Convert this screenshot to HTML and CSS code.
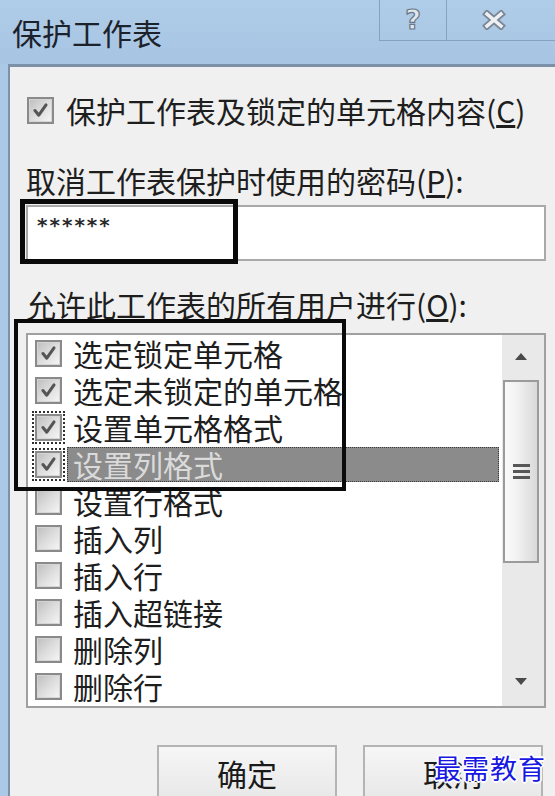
FILE: index.html
```html
<!DOCTYPE html>
<html lang="zh-CN">
<head>
<meta charset="utf-8">
<title>保护工作表</title>
<link rel="stylesheet" href="styles.css">
</head>
<body>
<div class="window">
  <div class="titlebar">
    <div class="title">保护工作表</div>
    <div class="ctrls">
      <div class="cbtn help">?</div>
      <div class="cbtn close">
        <svg width="24" height="20" viewBox="0 0 24 20"><path d="M5 4 L19 16 M19 4 L5 16" stroke="#7a8693" stroke-width="7" stroke-linecap="square" fill="none"/><path d="M5 4 L19 16 M19 4 L5 16" stroke="#eef1f4" stroke-width="3.5" stroke-linecap="square" fill="none"/></svg>
      </div>
    </div>
  </div>
  <div class="frame">
    <div class="client">
      <div class="opt">
        <span class="cb on"><svg viewBox="0 0 27 27"><path d="M7 13.5 L11.5 19 L20 7" class="tick"/></svg></span>
        <span class="opt-text">保护工作表及锁定的单元格内容(<u>C</u>)</span>
      </div>
      <div class="label">取消工作表保护时使用的密码(<u>P</u>):</div>
      <div class="pwd">******</div>
      <div class="label label2">允许此工作表的所有用户进行(<u>O</u>):</div>
      <div class="list">
        <div class="items">
          <div class="row"><span class="cb on"><svg viewBox="0 0 27 27"><path d="M7 13.5 L11.5 19 L20 7" class="tick"/></svg></span><span class="txt">选定锁定单元格</span></div>
          <div class="row"><span class="cb on"><svg viewBox="0 0 27 27"><path d="M7 13.5 L11.5 19 L20 7" class="tick"/></svg></span><span class="txt">选定未锁定的单元格</span></div>
          <div class="row"><span class="cb on focus"><svg viewBox="0 0 27 27"><path d="M7 13.5 L11.5 19 L20 7" class="tick"/></svg></span><span class="txt">设置单元格格式</span></div>
          <div class="row sel"><span class="cb on focus"><svg viewBox="0 0 27 27"><path d="M7 13.5 L11.5 19 L20 7" class="tick"/></svg></span><span class="txt">设置列格式</span></div>
          <div class="row"><span class="cb"></span><span class="txt">设置行格式</span></div>
          <div class="row"><span class="cb"></span><span class="txt">插入列</span></div>
          <div class="row"><span class="cb"></span><span class="txt">插入行</span></div>
          <div class="row"><span class="cb"></span><span class="txt">插入超链接</span></div>
          <div class="row"><span class="cb"></span><span class="txt">删除列</span></div>
          <div class="row"><span class="cb"></span><span class="txt">删除行</span></div>
        </div>
        <div class="scroll">
          <div class="arrow"><svg width="12" height="7" viewBox="0 0 12 7"><path d="M0 7 L6 0 L12 7 Z" fill="#4a4a4a"/></svg></div>
          <div class="thumb"><span class="grip"></span><span class="grip"></span><span class="grip"></span></div>
          <div class="arrow down"><svg width="12" height="7" viewBox="0 0 12 7"><path d="M0 0 L12 0 L6 7 Z" fill="#4a4a4a"/></svg></div>
        </div>
      </div>
      <div class="buttons">
        <div class="btn">确定</div>
        <div class="btn">取消</div>
      </div>
    </div>
  </div>
</div>
<div class="mark mark-pwd"></div>
<div class="mark mark-list"></div>
<div class="watermark">最需教育</div>
</body>
</html>
```
FILE: styles.css
```css
html, body {
  margin: 0;
  padding: 0;
}
body {
  width: 555px;
  height: 796px;
  overflow: hidden;
  position: relative;
  background: #abc9e7;
  font-family: "Noto Sans CJK SC", "Microsoft YaHei", sans-serif;
  color: #1e1e1e;
}
.window {
  height: 796px;
  display: flex;
  flex-direction: column;
  background: #abc9e7;
}
.titlebar {
  height: 64px;
  flex: none;
  display: flex;
  align-items: flex-start;
  background: linear-gradient(#afcce8, #a7c5e3);
}
.title {
  font-size: 30px;
  line-height: 64px;
  padding-left: 12px;
  color: #1c222b;
}
.ctrls {
  margin-left: auto;
  display: flex;
}
.cbtn {
  height: 40px;
  display: flex;
  align-items: center;
  justify-content: center;
  border-bottom: 1px solid #86a2bf;
  box-sizing: content-box;
}
.help {
  width: 66px;
  border-left: 1px solid #86a2bf;
  border-right: 1px solid #86a2bf;
  font-family: "DejaVu Sans", sans-serif;
  font-weight: bold;
  font-size: 27px;
  line-height: 36px;
  color: #dfe6ee;
  -webkit-text-stroke: 1.2px #6c7886;
}
.close {
  width: 108px;
  padding-right: 14px;
  box-sizing: border-box;
  height: 41px;
}
.frame {
  flex: 1;
  display: flex;
  padding-left: 8px;
}
.client {
  flex: 1;
  border-top: 3px solid #7c90a7;
  border-left: 2px solid #7c90a7;
  background: #f0f0f0;
  padding: 23px 9px 0 16px;
  font-size: 30px;
}
.opt {
  display: flex;
  align-items: center;
  height: 40px;
}
.opt .cb {
  margin-left: 1px;
}
.opt-text {
  margin-left: 12px;
  line-height: 40px;
}
.cb {
  width: 27px;
  height: 27px;
  box-sizing: border-box;
  border: 2px solid #8a8a8a;
  background: linear-gradient(135deg, #bdbdbd 0%, #dadada 45%, #f7f7f7 100%);
  box-shadow: inset 0 0 0 1px #d4d4d4;
  flex: none;
  display: flex;
}
.cb svg {
  width: 23px;
  height: 23px;
}
.tick {
  fill: none;
  stroke: #555555;
  stroke-width: 3.6;
  stroke-linecap: round;
  stroke-linejoin: round;
}
.cb.focus {
  outline: 2px dotted #303030;
  outline-offset: 1px;
}
.label {
  margin-top: 30px;
  line-height: 40px;
}
.label2 {
  margin-top: 23px;
}
.pwd {
  margin-top: 5px;
  height: 56px;
  box-sizing: border-box;
  border: 2px solid #a9a9a9;
  background: #ffffff;
  padding: 6px 0 0 9px;
  font-family: "DejaVu Sans", sans-serif;
  font-weight: bold;
  font-size: 20px;
  line-height: 24px;
  letter-spacing: 2px;
  color: #2a2a2a;
}
.list {
  margin-top: 9px;
  height: 375px;
  box-sizing: border-box;
  border: 2px solid #a0a0a0;
  background: #ffffff;
  display: flex;
}
.items {
  flex: 1;
  padding: 0 3px 0 7px;
}
.row {
  height: 37px;
  display: flex;
  align-items: center;
}
.txt {
  margin-left: 5px;
  padding-left: 6px;
  line-height: 35px;
  height: 35px;
  flex: 1;
  white-space: nowrap;
}
.row.sel .txt {
  background: #8b8b8b;
  color: #dadada;
  outline: 1px dotted #3a3a3a;
  outline-offset: -1px;
}
.scroll {
  width: 42px;
  flex: none;
  background: #e9e9e9;
  display: flex;
  flex-direction: column;
  align-items: flex-start;
}
.arrow {
  height: 43px;
  width: 38px;
  display: flex;
  align-items: center;
  justify-content: center;
}
.arrow.down {
  margin-top: auto;
  height: 50px;
}
.thumb {
  margin: 2px 0 0 1px;
  width: 36px;
  height: 183px;
  box-sizing: border-box;
  border: 2px solid #9b9b9b;
  background: linear-gradient(90deg, #fafafa 0%, #f1f1f1 40%, #d9d9d9 100%);
  display: flex;
  flex-direction: column;
  align-items: center;
  justify-content: center;
  gap: 3px;
}
.grip {
  width: 17px;
  height: 3px;
  background: #575757;
}
.buttons {
  margin-top: 37px;
  display: flex;
  justify-content: flex-end;
  gap: 26px;
  padding-right: 3px;
}
.btn {
  width: 180px;
  height: 70px;
  box-sizing: border-box;
  border: 2px solid #b4b4b4;
  background: linear-gradient(#f6f6f6, #e4e4e4);
  text-align: center;
  line-height: 52px;
  font-size: 30px;
  color: #1a1a1a;
}
.mark {
  position: absolute;
  box-sizing: border-box;
  border-style: solid;
  border-color: #0a0a0a;
}
.mark-pwd {
  left: 20px;
  top: 199px;
  width: 218px;
  height: 65px;
  border-width: 5px;
}
.mark-list {
  left: 14px;
  top: 319px;
  width: 332px;
  height: 172px;
  border-width: 4px;
}
.watermark {
  position: absolute;
  left: 434px;
  top: 748px;
  font-size: 27px;
  letter-spacing: 1px;
  color: #1818e2;
  line-height: 40px;
  text-shadow: 1px 1px 0 #fff, -1px -1px 0 #fff, 1px -1px 0 #fff, -1px 1px 0 #fff, 0 2px 0 #fff, 2px 0 0 #fff, 0 -2px 0 #fff, -2px 0 0 #fff;
}
```
